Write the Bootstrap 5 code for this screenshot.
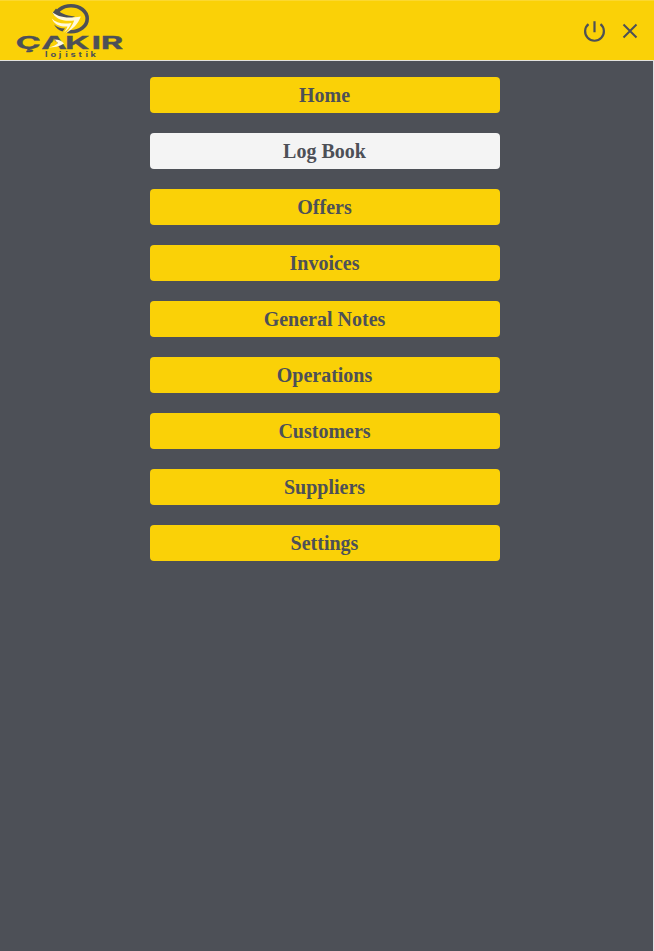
<!DOCTYPE html>
<html lang="en">
<head>
<meta charset="utf-8">
<meta name="viewport" content="width=device-width, initial-scale=1">
<title>Çakır Lojistik</title>
<link rel="stylesheet" href="https://cdn.jsdelivr.net/npm/bootstrap@5.3.0/dist/css/bootstrap.min.css">
<style>
:root { --brand: #fad107; --slate: #4d5057; }
body { background: var(--slate); font-family: "Liberation Serif", "Times New Roman", serif; }
.topbar { height: 61px; background: var(--brand); border-top: 1px solid #fbd830; border-bottom: 1px solid #e3e3df; color: var(--slate); }
.brand-logo { margin-top: -1px; }
.menu-panel { border-right: 1px solid #dfe1e5; padding: 16px 3px 0 0; min-height: calc(100vh - 61px); }
.menu-list { width: 350px; gap: 20px; }
.menu-btn { --bs-btn-bg: var(--brand); --bs-btn-color: var(--slate); --bs-btn-hover-bg: #f4f4f4; --bs-btn-hover-color: var(--slate); --bs-btn-active-bg: #f4f4f4; --bs-btn-active-color: var(--slate); --bs-btn-border-radius: 4px; height: 36px; padding: 0 1px 0 0; font-size: 20px; line-height: 36px; font-weight: 700; }
.icon-btn { color: var(--slate) !important; line-height: 0; }
</style>
</head>
<body>
<header class="topbar d-flex align-items-start justify-content-between">
  <a href="#" class="brand-logo d-block lh-1" aria-label="Çakır Lojistik">
    <svg class="d-block" width="130" height="60" viewBox="0 0 130 60" fill="#4d5057">
      <!-- Ring -->
      <ellipse cx="71" cy="18.700" rx="16.200" ry="13" fill="none" stroke="#4d5057" stroke-width="3.600"/>
      <path fill="#fad107" d="M50 11L57 14L68 18L76 18L76 22L66 34L60 33.500L50 25Z"/>
      <path d="M52.500 13L56 8.500C60 13 65 15.500 75 16.500L70 19C62 19 56 17 52.500 13Z"/>
      <!-- Feathers -->
      <path fill="#fff9df" d="M52 11.500C57 17 66 18.800 80.800 16.500C78 24 73 29 65.500 33.500C70 29 73 24.500 74.200 20.500C63 22 54.500 18.500 52 11.500Z"/>
      <path fill="#fff9df" d="M51.800 18.500C56 23 63 24.500 71.500 23C70 27 67.500 30 63.500 33C65.500 30.500 67 28.500 67.500 26.500C59 27 54 24 51.800 18.500Z"/>
      <path d="M54 24.500C57 27 60.500 28.500 65 28.500L62.500 31.500C59 30.500 56 28 54 24.500Z"/>
      <text transform="translate(0 49) scale(1.95 1)" x="8 21.200 33.300 46.900 51.700" y="0" font-family="Inter, sans-serif" font-weight="700" font-size="17.600" stroke="#4d5057" stroke-width="0.250">ÇAKIR</text>
      <path fill="#fad107" d="M51 43L57 41L59 49.700L54 49.700L53.500 47L49 47.500Z"/>
      <path fill="#fff9df" d="M48 47.500C53 46.500 56 45.500 58 43L54.500 39.500C59 39.500 62 41 64 43.500C59 46.500 54 47.500 48 47.500Z"/>
      <text transform="translate(0 57.300) scale(1.3 1)" x="34.700 38.900 45.200 50.200 54.300 60.300 65.700 69.600" y="0" font-family="Inter, sans-serif" font-weight="700" font-size="7.200">lojistik</text>
    </svg>
  </a>
  <div class="d-flex pe-3">
    <button class="icon-btn btn border-0 p-0 me-3" aria-label="Log out">
      <svg width="24" height="60" viewBox="582 0.7 24 60" fill="none" stroke="currentColor" stroke-width="2.200"><path d="M588.500 23.800A9.400 9.400 0 1 0 600.500 23.800M594.500 21V32"/></svg>
    </button>
    <button class="icon-btn btn border-0 p-0" aria-label="Close">
      <svg width="16" height="60" viewBox="622 1 16 60" fill="none" stroke="currentColor" stroke-width="2"><path d="M623.500 24.500L636.500 37.500M636.500 24.500L623.500 37.500"/></svg>
    </button>
  </div>
</header>
<main class="menu-panel">
  <nav class="menu-list d-flex flex-column mx-auto">
    <a href="#" class="menu-btn btn border-0">Home</a>
    <a href="#" class="menu-btn btn border-0 active">Log Book</a>
    <a href="#" class="menu-btn btn border-0">Offers</a>
    <a href="#" class="menu-btn btn border-0">Invoices</a>
    <a href="#" class="menu-btn btn border-0">General Notes</a>
    <a href="#" class="menu-btn btn border-0">Operations</a>
    <a href="#" class="menu-btn btn border-0">Customers</a>
    <a href="#" class="menu-btn btn border-0">Suppliers</a>
    <a href="#" class="menu-btn btn border-0">Settings</a>
  </nav>
</main>
<script src="https://cdn.jsdelivr.net/npm/bootstrap@5.3.0/dist/js/bootstrap.bundle.min.js"></script>
</body>
</html>
